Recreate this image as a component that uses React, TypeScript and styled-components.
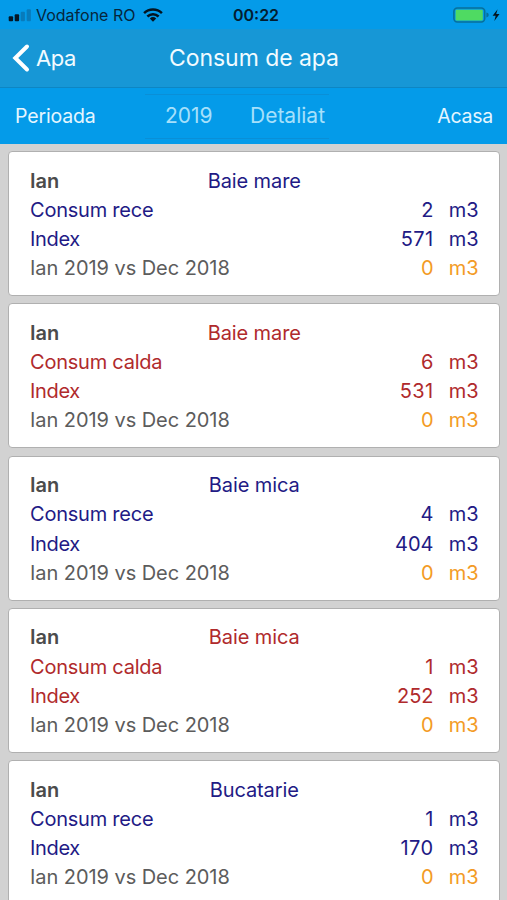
import React from "react";
import styled, { createGlobalStyle } from "styled-components";

const GlobalStyle = createGlobalStyle`
  * { box-sizing: border-box; }
  html, body { margin: 0; padding: 0; overflow: hidden; }
  body { font-family: Inter, "Liberation Sans", sans-serif; background: #d2d2d2; }
`;

const Screen = styled.div`
  width: 507px;
  height: 900px;
  overflow: hidden;
  display: flex;
  flex-direction: column;
  background: #d2d2d2;
`;

const StatusBar = styled.div`
  flex: none;
  height: 29px;
  display: grid;
  grid-template-columns: 1fr auto 1fr;
  align-items: center;
  padding: 0 6px 0 8px;
  background: #049be9;
  color: #06263c;
`;

const Carrier = styled.div`
  display: flex;
  align-items: center;
  font-size: 16px;
  line-height: 20px;
  white-space: nowrap;
`;

const CarrierName = styled.span`
  margin: 0 8px 0 4px;
`;

const Clock = styled.div`
  padding-left: 3px;
  font-size: 16px;
  line-height: 20px;
  font-weight: 600;
  color: #031d30;
`;

const Power = styled.div`
  display: flex;
  justify-content: flex-end;
  align-items: center;
`;

const NavBar = styled.header`
  flex: none;
  height: 59px;
  display: grid;
  grid-template-columns: 1fr auto 1fr;
  align-items: center;
  padding: 0 12px 1px;
  background: #1797d6;
  border-bottom: 1px solid #0d86c4;
  color: #f2fbff;
`;

const BackButton = styled.button`
  display: flex;
  align-items: center;
  gap: 6px;
  padding: 0;
  border: 0;
  background: none;
  color: inherit;
  font: 400 22px/28px Inter, sans-serif;
  letter-spacing: -0.45px;
`;

const Title = styled.h1`
  margin: 0;
  padding-left: 1px;
  font-size: 23px;
  line-height: 28px;
  font-weight: 400;
  letter-spacing: -0.05px;
`;

const FilterBar = styled.div`
  flex: none;
  height: 56px;
  display: flex;
  align-items: center;
  padding: 0 14px 0 15px;
  background: #049be9;
  color: #e4f6ff;
  font-size: 19.5px;
  line-height: 24px;
`;

const FilterLabel = styled.span`
  width: 130px;
  letter-spacing: -0.15px;
`;

const Picker = styled.div`
  width: 184px;
  height: 45px;
  display: flex;
  align-items: center;
  border-top: 1px solid #0a8fd7;
  border-bottom: 1px solid #0a8fd7;
  color: #a6e0fb;
  font-size: 21px;
`;

const PickerValue = styled.span<{ $width: number; $inset: number }>`
  width: ${(p) => p.$width}px;
  padding-left: ${(p) => p.$inset}px;
  white-space: nowrap;
`;

const HomeLink = styled.span`
  margin-left: auto;
  letter-spacing: -0.25px;
`;

const List = styled.main`
  flex: 1;
  min-height: 0;
  display: flex;
  flex-direction: column;
  gap: 7.3px;
  padding: 7.2px 7.5px 0 8px;
`;

const Card = styled.section`
  flex: none;
  height: 145px;
  padding: 14.3px 20px 0 21px;
  border: 1px solid #b0b0b0;
  border-radius: 4px;
  background: #fff;
`;

const Row = styled.div<{ $color: string }>`
  height: 29.2px;
  display: grid;
  grid-template-columns: 1fr auto 45px;
  align-items: center;
  font-size: 20px;
  line-height: 29px;
  color: ${(p) => p.$color};
`;

const HeadRow = styled(Row)`
  grid-template-columns: 1fr auto 1fr;
`;

const Month = styled.span`
  font-weight: 600;
  color: #4b4b4b;
`;

const Label = styled.span<{ $spacing: number }>`
  letter-spacing: ${(p) => p.$spacing}px;
`;

const Amount = styled.span<{ $wide?: boolean }>`
  letter-spacing: ${(p) => (p.$wide ? 0.4 : 0)}px;
`;

const Unit = styled.span`
  text-align: right;
`;

const NAVY = "#221a85";
const RED = "#b02a2c";
const GREY = "#5c5c5c";
const ORANGE = "#f39b25";

const readings = [
  { room: "Baie mare", hot: false, used: 2, index: 571 },
  { room: "Baie mare", hot: true, used: 6, index: 531 },
  { room: "Baie mica", hot: false, used: 4, index: 404 },
  { room: "Baie mica", hot: true, used: 1, index: 252 },
  { room: "Bucatarie", hot: false, used: 1, index: 170 },
];

const DeltaRow = styled(Row)`
  ${Amount}, ${Unit} { color: ${ORANGE}; }
`;

function SignalIcon() {
  return (
    <svg width="24" height="16" viewBox="0 0 24 16">
      <rect x="0.7" y="9.2" width="4.4" height="5" rx="1" fill="#041726" />
      <rect x="6.7" y="7.2" width="4.4" height="7" rx="1" fill="#041726" />
      <rect x="12.7" y="4.7" width="4.2" height="9.5" rx="1" fill="#087bbb" />
      <rect x="18.7" y="2.2" width="4.2" height="12" rx="1" fill="#087bbb" />
    </svg>
  );
}

function WifiIcon() {
  return (
    <svg width="20" height="14" viewBox="0 0 20 14" fill="none" stroke="#04141f" strokeWidth="2.5">
      <path d="M1.1 5.1a12.7 12.7 0 0 1 17.8 0" />
      <path d="M4.4 8.5a8 8 0 0 1 11.2 0" />
      <path d="M10 13.8 6.8 10.5a4.7 4.7 0 0 1 6.4 0Z" fill="#04141f" stroke="none" />
    </svg>
  );
}

function BatteryIcon() {
  return (
    <svg width="48" height="16" viewBox="0 0 48 16">
      <rect x="0.9" y="1" width="30.8" height="14" rx="3.4" fill="none" stroke="#087099" strokeWidth="1.6" />
      <rect x="2.6" y="2.7" width="27.2" height="10.7" rx="1.2" fill="#4fda62" />
      <path d="M33.4 5.6q2.4.5 2.4 2.4t-2.4 2.4Z" fill="#087099" />
      <path d="M44.6 2.2 39.6 8.7h3.1l-1.4 5.2 5.2-6.8h-3.3Z" fill="#04141f" />
    </svg>
  );
}

function ChevronIcon() {
  return (
    <svg width="18" height="30" viewBox="0 0 18 30" fill="none" stroke="#fff" strokeWidth="4" strokeLinecap="round" strokeLinejoin="miter">
      <path d="M15 3.5 3.3 15 15 26.5" />
    </svg>
  );
}

export default function App() {
  return (
    <>
      <GlobalStyle />
      <Screen>
        <StatusBar>
          <Carrier>
            <SignalIcon />
            <CarrierName>Vodafone RO</CarrierName>
            <WifiIcon />
          </Carrier>
          <Clock>00:22</Clock>
          <Power>
            <BatteryIcon />
          </Power>
        </StatusBar>
        <NavBar>
          <BackButton>
            <ChevronIcon />
            Apa
          </BackButton>
          <Title>Consum de apa</Title>
        </NavBar>
        <FilterBar>
          <FilterLabel>Perioada</FilterLabel>
          <Picker>
            <PickerValue $width={105} $inset={20}>2019</PickerValue>
            <PickerValue $width={79} $inset={0}>Detaliat</PickerValue>
          </Picker>
          <HomeLink>Acasa</HomeLink>
        </FilterBar>
        <List>
          {readings.map((r, i) => {
            const tone = r.hot ? RED : NAVY;
            return (
              <Card key={i}>
                <HeadRow $color={tone}>
                  <Month>Ian</Month>
                  <Label $spacing={-0.1}>{r.room}</Label>
                </HeadRow>
                <Row $color={tone}>
                  <Label $spacing={-0.23}>{r.hot ? "Consum calda" : "Consum rece"}</Label>
                  <Amount>{r.used}</Amount>
                  <Unit>m3</Unit>
                </Row>
                <Row $color={tone}>
                  <Label $spacing={-0.35}>Index</Label>
                  <Amount $wide={String(r.index).includes("1")}>{r.index}</Amount>
                  <Unit>m3</Unit>
                </Row>
                <DeltaRow $color={GREY}>
                  <Label $spacing={-0.06}>Ian 2019 vs Dec 2018</Label>
                  <Amount>0</Amount>
                  <Unit>m3</Unit>
                </DeltaRow>
              </Card>
            );
          })}
        </List>
      </Screen>
    </>
  );
}
